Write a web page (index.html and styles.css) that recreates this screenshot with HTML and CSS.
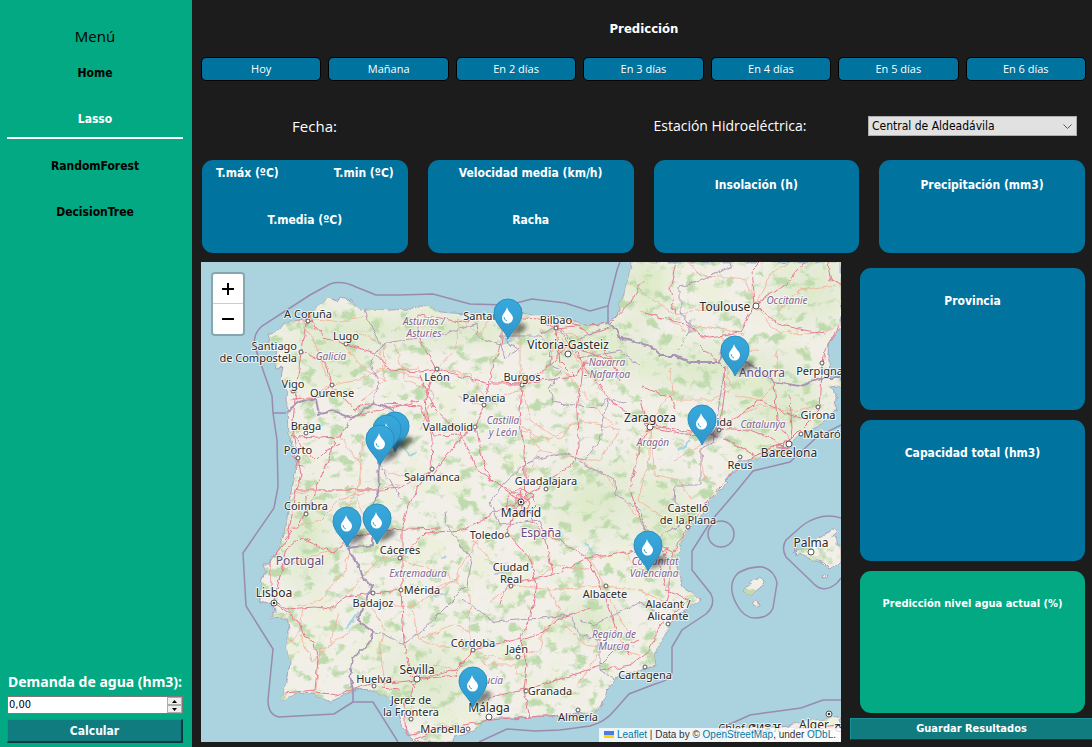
FILE: index.html
```html
<!DOCTYPE html>
<html lang="es">
<head>
<meta charset="utf-8">
<title>Predicción</title>
<link rel="stylesheet" href="styles.css">
</head>
<body>
<div class="app">
  <aside class="sidebar">
    <h2 class="menu-title">Menú</h2>
    <nav class="menu">
      <a class="menu-link" href="#home">Home</a>
      <a class="menu-link active" href="#lasso">Lasso</a>
      <a class="menu-link" href="#randomforest">RandomForest</a>
      <a class="menu-link" href="#decisiontree">DecisionTree</a>
    </nav>
    <form class="demand">
      <label class="demand-label" for="demanda">Demanda de agua (hm3):</label>
      <div class="spin">
        <input class="spin-input" id="demanda" type="text" inputmode="decimal" value="0,00">
        <div class="spin-arrows">
          <button class="spin-button" type="button" aria-label="Aumentar"><svg width="5" height="3" viewBox="0 0 5 3"><path d="M0 3 2.500 0 5 3z"/></svg></button>
          <button class="spin-button" type="button" aria-label="Disminuir"><svg width="5" height="3" viewBox="0 0 5 3"><path d="M0 0 2.500 3 5 0z"/></svg></button>
        </div>
      </div>
      <button class="action" type="button">Calcular</button>
    </form>
  </aside>

  <main class="main">
    <h1 class="title">Predicción</h1>
    <div class="days">
      <button class="day" type="button">Hoy</button>
      <button class="day" type="button">Mañana</button>
      <button class="day" type="button">En 2 días</button>
      <button class="day" type="button">En 3 días</button>
      <button class="day" type="button">En 4 días</button>
      <button class="day" type="button">En 5 días</button>
      <button class="day" type="button">En 6 días</button>
    </div>
    <div class="filters">
      <span class="filter-label date-label">Fecha:</span>
      <label class="filter-label station-label" for="estacion">Estación Hidroeléctrica:</label>
      <div class="select-wrap">
        <select class="station" id="estacion"><option>Central de Aldeadávila</option></select>
        <svg class="chevron" width="9" height="6" viewBox="0 0 9 6"><path d="M.5.5l4 4 4-4" fill="none" stroke="#555"/></svg>
      </div>
    </div>
    <section class="cards">
      <div class="card card-double">
        <div class="pair"><span>T.máx (ºC)</span><span>T.min (ºC)</span></div>
        <span>T.media (ºC)</span>
      </div>
      <div class="card card-double"><span>Velocidad media (km/h)</span><span>Racha</span></div>
      <div class="card card-single">Insolación (h)</div>
      <div class="card card-single">Precipitación (mm3)</div>
    </section>
    <section class="lower">
      <div class="map">
        <svg class="map-canvas" viewBox="201 262 640 480" role="img" aria-label="Mapa de España y Portugal">
          <defs>
            <path id="land" d="M632 262L627 282 621 305 616 317 606 323 600 325 586 325 573 322 560 317 543 315 530 315 520 312 493 317 463 314 440 312 430 307 420 305 413 309 390 310 360 309 353 303 346 298 340 297 335 300 328 298 322 303 315 308 310 318 300 320 292 321 285 323 275 332 268 334 270 345 278 354 274 360 276 368 283 367 281 378 287 390 286 398 287 412 288 429 292 445 297 462 294 478 289 502 286 527 278 550 270 565 263 565 266 572 263 580 260 597 260 602 272 605 276 610 271 618 282 617 288 620 289 633 287 647 290 663 287 683 282 700 297 693 313 694 330 702 343 695 357 689 373 690 387 697 397 707 403 727 413 738 417 742H452L455 737 470 732 483 722 497 718 530 717 553 716 567 717 578 712 593 715 602 705 607 690 617 678 640 670 657 665 655 655 660 643 668 630 673 617 690 607 701 600 693 593 683 587 677 572 677 557 682 540 690 528 700 518 708 502 720 489 729 483 725 479 740 462 757 459 773 450 787 447 800 435 823 422 835 410 837 399 832 387 841 385V379L830 377 828 362 828 345 837 332 841 329V262Z"/>
            <path id="isles" d="M797 551l10-6 12-7 8-5 6-4 3 3-4 4 5 3v5l4 2v15l-3 3-9 5-6-6-8-4-7-1-8-6-3 3-1-5-3 2 4-4zM745 591l2-5 6-5 8-3 3 3-5 7-6 4-2 3-6-1zM753 603l4-2 1 3 3 1-3 2-5-1z M823 576l4-2-1 4-2 1z M717 742l20-8 24-6 28-3 20-4 18-2 14-3v26z"/>
            <clipPath id="land-clip"><use href="#land"/><use href="#isles"/></clipPath>
            <filter id="woods" x="0" y="0" width="100%" height="100%" color-interpolation-filters="sRGB">
              <feTurbulence type="fractalNoise" baseFrequency=".07 .09" numOctaves="5" seed="8"/>
              <feColorMatrix values="0 0 0 0 .75  0 0 0 0 .86  0 0 0 0 .68  6 0 0 0 -3.300"/>
            </filter>
            <filter id="fields" x="0" y="0" width="100%" height="100%" color-interpolation-filters="sRGB">
              <feTurbulence type="fractalNoise" baseFrequency=".03" numOctaves="4" seed="21"/>
              <feColorMatrix values="0 0 0 0 .93  0 0 0 0 .94  0 0 0 0 .86  4 0 0 0 -2"/>
            </filter>
            <filter id="rough" x="-5%" y="-5%" width="110%" height="110%">
              <feTurbulence type="fractalNoise" baseFrequency=".12" numOctaves="2" seed="4"/>
              <feDisplacementMap in="SourceGraphic" scale="6" xChannelSelector="R" yChannelSelector="G"/>
            </filter>
            <filter id="soft" x="-50%" y="-50%" width="200%" height="200%"><feGaussianBlur stdDeviation="2"/></filter>
            <linearGradient id="pin-fill" x1="0" y1="0" x2="0" y2="1"><stop offset="0" stop-color="#38a9dc"/><stop offset="1" stop-color="#2f97cb"/></linearGradient>
            <radialGradient id="veil"><stop offset="0" stop-color="#cfe5b6" stop-opacity=".6"/><stop offset="1" stop-color="#cfe5b6" stop-opacity="0"/></radialGradient>
            <g id="pin">
              <path d="M0 39L8 25Q17 23 19 28 16 34 0 39z" fill="#222" opacity=".55" filter="url(#soft)"/>
              <path d="M0 40C-3 31-14 25-14 14A14 14 0 0 1 14 14C14 25 4 31 0 40z" fill="url(#pin-fill)" stroke="#2a8fc2"/>
              <path d="M-1 8C-2 13-6 15-6 19A5 5 0 0 0 5 19C5 15 0 13-1 8z" fill="#fff"/>
              <path d="M-4 18Q-4 21-1 22" fill="none" stroke="#38a9dc"/>
            </g>
          </defs>
          <rect x="201" y="262" width="640" height="480" fill="#aad3df"/>
          <g filter="url(#rough)">
            <g fill="#f2efe9" stroke="#9b86a8" stroke-width=".7"><use href="#land"/><use href="#isles"/></g>
            <g clip-path="url(#land-clip)">
              <rect x="201" y="262" width="640" height="480" filter="url(#fields)"/>
              <g fill="url(#veil)">
                <ellipse cx="330" cy="345" rx="60" ry="50"/><ellipse cx="440" cy="330" rx="130" ry="28"/>
                <ellipse cx="590" cy="345" rx="80" ry="40"/><ellipse cx="710" cy="368" rx="130" ry="38"/>
                <ellipse cx="810" cy="290" rx="60" ry="55"/><ellipse cx="645" cy="280" rx="36" ry="60"/>
                <ellipse cx="780" cy="410" rx="70" ry="50"/><ellipse cx="600" cy="500" rx="75" ry="55"/>
                <ellipse cx="668" cy="530" rx="40" ry="75"/><ellipse cx="590" cy="620" rx="44" ry="34"/>
                <ellipse cx="425" cy="680" rx="70" ry="52"/><ellipse cx="305" cy="540" rx="40" ry="80"/>
              </g>
              <rect x="201" y="262" width="640" height="480" filter="url(#woods)"/>
              <g fill="none" stroke="#aad3df" stroke-width="2"><path d="M400 445l8 10 8-2 M429 587l7 9 12-2 M345 628l8-7 6-9 M585 542l5 6 3 8 M690 440l-7 8-5 2 M502 343l9-3 M495 573l8-1 M447 555l-6 4"/></g>
            </g>
          </g>
          <g filter="url(#rough)" fill="none" stroke="#f4ad98" stroke-width=".8">
            <path d="M297 319L313 338 326 376 331 385 360 380 385 367 384 345 355 331M315 319L342 322 367 316M331 385L312 396 290 400M342 343L366 370 385 380M385 370L420 368M380 371L393 372 420 377M362 402L385 380 380 350M340 436L362 468 360 485 345 510M363 437L360 475 357 500 367 520M290 494L320 490 370 490 400 485M284 530L320 520 340 500 365 492M283 570L300 560 345 545M297 606L321 600 345 570 350 551M288 645L300 630 303 607M300 634L312 662 330 645 338 612M316 690L320 650 350 632M345 596L380 558 401 555M366 597L385 630 380 650 386 690M373 604L410 607 440 590 460 575M400 560L450 575 469 595 470 630 473 650M413 610L418 640 440 646 470 648M420 638L455 625 470 632M473 650L486 665 515 665 517 675M473 650L505 660 540 650 545 625M411 675L435 665 458 671M380 470L415 480 432 470M395 345L405 380 435 393 420 430M437 369L455 350 459 318M459 318L480 335 491 315M437 369L470 374 485 400M455 395L480 405 520 390 520 315M522 387L530 420 560 440 575 420M522 387L550 365 559 322M540 330L575 335 590 350 610 360M558 365L590 400 612 425M562 340L605 395M621 430L580 420 550 440 520 430M620 430L600 460 580 460 540 450M517 500L540 450 523 425M580 460L610 480 635 515 650 530M480 537L465 560 455 580 430 590M473 540L510 585 490 602M512 585L550 590 605 586M546 585L560 610 540 640M605 586L590 560 625 552 641 575M606 586L620 620 635 640M605 586L640 590 670 604M592 625L600 650 578 685M565 625L585 645 620 650 640 655M650 427L650 457 638 500 668 520M640 440L665 400 673 392 670 368M650 430L655 475 680 480 690 500M675 460L700 445 705 480M675 400L710 400 730 390 724 350M719 335L735 355 760 350M735 395L760 400 780 380 775 350M730 420L760 405 795 412 818 405M641 312L670 320 688 333 700 325 745 334M688 262L700 275 745 280 757 305M640 290L675 315 730 305M755 305L775 330 800 335 832 330M790 262L770 275 755 306M780 310L800 290 835 285M530 555L535 580 555 565 590 570"/>
          </g>
          <g filter="url(#rough)" fill="none" stroke="#e77991" stroke-width="1">
            <path d="M308 320L301 353 296 390 292 430 298 458 301 475 297 490 287 540 270 560 270 590 276 602M310 320L325 338 342 343 375 353 390 370 420 372 437 369 489 384 522 384 553 362 568 345M301 350L325 363 331 385 354 410 365 403 420 406 434 436M293 399L320 397 331 385M298 438L340 436 352 417 420 401M292 435L316 460 325 451 340 445M297 490L330 490 382 490 400 488 432 470M306 515L335 440M284 540L306 515 306 495M276 592L287 550 300 538 335 553 346 540 380 530 440 528M275 602L285 609 315 607 331 609 345 597 373 593 401 590M276 605L298 620 304 636 314 642 318 660 315 690 285 693M315 692L337 695 373 683 389 683 417 680M401 590L404 640 410 675 417 680 405 706 407 735 443 728 483 722 540 716 578 715M434 369L425 400 432 440 431 470 410 500 402 525 402 590M437 371L420 340 418 315 440 318 459 322 491 317 540 320 556 328 610 323 632 300 644 280M502 316L502 340 491 374 485 402 475 428 461 437 431 478M434 436L461 435 478 470 503 488 520 500M461 435L475 428 480 450 490 480 518 494M420 375L433 407 461 434M491 382L522 383 575 377 584 363 610 365M522 387L520 410 524 450 526 500M555 325L560 362 575 377M553 320L570 340 584 365 612 402 645 423 690 432 715 428 750 430 775 440 789 450M568 345L590 353 613 360M584 363L577 410 578 445 575 462 520 500M520 500L490 515 463 530 425 533 402 557M520 500L507 533 530 560 537 585 530 620 519 638 473 650 455 675 417 680M520 500L545 540 553 575 587 558 625 553 653 547M553 575L506 585 500 604M546 532L587 558 600 585 620 640 630 655M519 640L543 632 557 620 590 608M519 638L527 665 524 690 490 697 480 715M524 690L560 680 600 665 615 650 640 640M524 690L530 717M417 680L455 670 473 652M650 427L645 420 640 400M650 427L640 445 630 490 640 520 650 540 673 552M648 533L660 560 665 590 690 600 660 625 650 650 630 665 600 670M650 427L685 434 720 436 755 455 790 448M708 500L680 540 670 560 670 590 665 610M709 500L730 475 757 455 790 440 820 410 822 370 825 350 838 328M719 430L740 415 760 400 790 415 808 420M774 382L777 420 790 442M790 396L792 430 788 450M755 305L780 325 825 334M755 305L740 332 705 338 688 325 645 313M755 305L752 270 760 262M755 305L785 285 805 262M676 262L670 290 675 315M641 387L671 397 675 410M720 425L725 390 724 368 700 345M600 345L612 360 620 380M568 320L590 335 610 328M400 690L382 688 M415 739l25-11M828 262l2 17 11 5M752 735l25-5 35-1 29-5M790 742l15-10 35-4"/>
            <path d="M506 502l6-10 9-4 12 8 4 9-8 8-12 2-10-5zM512 504l8-9 10 7-4 9-9 1zM507 512l27-16M520 490l4 25M779 444l6 4-8-1 8-5-2 13M649 421l-5 4 9 3-5 4 2-12M668 555l-7-4 8-2-4 7M299 320l13 2-2-6-8 2M291 456l8 5-3 4 8 1M415 673l8 8-12 0 5 8"/>
          </g>
          <g filter="url(#rough)" fill="none" stroke="#b09db8" stroke-width="1">
            <path d="M364 309L372 328 382 345 370 360 379 385 371 405M382 344L403 340 440 335 476 324M476 324L478 337 501 345 505 358 519 350 500 336 540 336 551 346 550 365 560 370 549 388 552 402 580 406 596 408 608 398 626 404M540 333L558 328 578 358 620 350 640 366M578 340L600 330M608 398L600 440 585 460 560 453 527 462 503 485 490 502 500 525 540 520 546 540M402 742M380 465L390 480 402 500M445 512L447 525 472 560 467 585 440 612 420 633 402 645 382 633 373 632M463 600L495 622 530 619 570 615 580 635 600 640 600 670 615 680M580 620L595 625 620 612 640 602 655 610M579 462L615 480 616 495 640 510 650 545 665 532 690 520M725 366L720 398 713 442 701 450 701 485 675 485 674 502 690 515M700 335L680 312 680 286 700 280 732 266 731 262M677 350L690 333 690 318"/>
          </g>
          <g filter="url(#rough)" fill="none" stroke="#a995b3" stroke-width="2">
            <path d="M286 412L299 402 316 399 319 415 330 411 350 417 361 413 373 402 392 410 393 430 378 455 379 492 374 505 372 545 348 548 358 565 365 580 373 585 366 602 357 620 373 632 370 643 353 658 350 676 353 690M608 323L616 328 622 339 640 343 655 350 660 356 676 356 690 362 719 362 722 350 735 358 755 368 774 382 800 386 820 379 841 379"/>
          </g>
          <g fill="none" stroke="#9a8aae" stroke-width="1.500">
            <path d="M353 690V702H373L398 742M353 702L334 714 279 717Q268 715 268 700L273 649 246 606 243 553 274 508 278 487 277 440 273 413H286M273 413L272 396 255 347Q252 335 262 326L310 295 330 284Q342 280 356 287L376 295H400L433 294 470 304 508 305 532 299 565 303 590 311 608 306 617 270 620 262M608 306V323M479 742L507 729 535 731 560 730 590 726Q605 722 614 711L629 694 655 684Q671 680 672 672V647L682 630 706 614Q716 605 711 594L692 570V551L711 521 735 493 753 471 790 462 817 437 841 425M717 730L750 715 801 708 823 700H841"/>
            <ellipse cx="721" cy="534" rx="13" ry="13"/><path d="M738 573Q750 566 763 567 775 571 777 583L773 608Q769 618 755 618 744 618 737 605 726 585 738 573zM841 518Q822 512 803 525L786 540Q781 548 786 557L812 582Q823 595 837 583L841 578"/>
          </g>
          <g class="towns">
            <circle cx="308" cy="321" r="2"/><circle cx="346" cy="344" r="2"/><circle cx="301" cy="352" r="2"/><circle cx="293" cy="391" r="2"/><circle cx="332" cy="385" r="2"/><circle cx="306" cy="433" r="2"/><circle cx="298" cy="458" r="2"/><circle cx="437" cy="369" r="2"/><circle cx="484" cy="405" r="2"/><circle cx="475" cy="427" r="2"/><circle cx="522" cy="385" r="2"/><circle cx="556" cy="328" r="2"/><circle cx="568" cy="354" r="3"/><circle cx="432" cy="469" r="2"/><circle cx="546" cy="489" r="2"/><circle cx="306" cy="514" r="2"/><circle cx="400" cy="558" r="2"/><circle cx="373" cy="593" r="2"/><circle cx="401" cy="590" r="2"/><circle cx="374" cy="686" r="2"/><circle cx="417" cy="679" r="3"/><circle cx="411" cy="719" r="2"/><circle cx="507" cy="535" r="2"/><circle cx="511" cy="586" r="2"/><circle cx="606" cy="586" r="2"/><circle cx="473" cy="650" r="2"/><circle cx="518" cy="657" r="2"/><circle cx="526" cy="691" r="2"/><circle cx="489" cy="717" r="3"/><circle cx="468" cy="729" r="2"/><circle cx="578" cy="710" r="2"/><circle cx="645" cy="667" r="2"/><circle cx="668" cy="624" r="2"/><circle cx="688" cy="527" r="2"/><circle cx="650" cy="427" r="3"/><circle cx="719" cy="430" r="2"/><circle cx="740" cy="457" r="2"/><circle cx="789" cy="444" r="3"/><circle cx="801" cy="434" r="2"/><circle cx="818" cy="407" r="2"/><circle cx="822" cy="363" r="2"/><circle cx="756" cy="306" r="3"/><circle cx="811" cy="552" r="3"/>
            <circle cx="521" cy="502" r="3"/><circle cx="274" cy="603" r="3"/><circle cx="829" cy="714" r="3"/>
          </g>
          <g fill="#333"><circle cx="521" cy="502" r="1.300"/><circle cx="274" cy="603" r="1.300"/><circle cx="829" cy="714" r="1.300"/></g>
          <g class="place">
            <text x="308" y="318">A Coruña</text><text x="346" y="340">Lugo</text><text x="297" y="350" class="end">Santiago</text><text x="297" y="362" class="end">de Compostela</text><text x="293" y="388">Vigo</text><text x="332" y="397">Ourense</text><text x="306" y="430">Braga</text><text x="298" y="454">Porto</text><text x="437" y="381">León</text><text x="484" y="402">Palencia</text><text x="448" y="431">Valladolid</text><text x="522" y="381">Burgos</text><text x="490" y="320">Santander</text><text x="556" y="324">Bilbao</text><text x="432" y="481">Salamanca</text><text x="546" y="485">Guadalajara</text><text x="306" y="510">Coimbra</text><text x="400" y="554">Cáceres</text><text x="373" y="607">Badajoz</text><text x="422" y="594">Mérida</text><text x="374" y="683">Huelva</text><text x="411" y="704">Jerez de</text><text x="411" y="716">la Frontera</text><text x="487" y="539">Toledo</text><text x="511" y="571">Ciudad</text><text x="511" y="583">Real</text><text x="605" y="598">Albacete</text><text x="473" y="647">Córdoba</text><text x="517" y="653">Jaén</text><text x="550" y="695">Granada</text><text x="443" y="733">Marbella</text><text x="578" y="721">Almería</text><text x="645" y="679">Cartagena</text><text x="668" y="608">Alacant /</text><text x="668" y="620">Alicante</text><text x="688" y="512">Castelló</text><text x="688" y="524">de la Plana</text><text x="717" y="426">Lleida</text><text x="740" y="469">Reus</text><text x="822" y="438">Mataró</text><text x="818" y="419">Girona</text><text x="823" y="375">Perpignan</text><text x="750" y="732">Chlef ⵛⵍⴻⴼ</text>
          </g>
          <g class="place city">
            <text x="568" y="349">Vitoria-Gasteiz</text><text x="650" y="422">Zaragoza</text><text x="725" y="311">Toulouse</text><text x="789" y="457">Barcelona</text><text x="521" y="517">Madrid</text><text x="274" y="597">Lisboa</text><text x="417" y="674">Sevilla</text><text x="489" y="712">Málaga</text><text x="811" y="547">Palma</text><text x="814" y="729">Alger</text><text x="841" y="729">الج</text>
          </g>
          <g class="place region">
            <text x="331" y="360">Galicia</text><text x="424" y="325">Asturias /</text><text x="424" y="337">Asturies</text><text x="607" y="366">Navarra</text><text x="607" y="378">- Nafarroa</text><text x="503" y="424">Castilla</text><text x="503" y="436">y León</text><text x="653" y="446">Aragón</text><text x="763" y="428">Catalunya</text><text x="787" y="304">Occitanie</text><text x="418" y="577">Extremadura</text><text x="655" y="565">Comunitat</text><text x="654" y="577">Valenciana</text><text x="614" y="638">Región de</text><text x="614" y="650">Murcia</text><text x="481" y="684">Andalucía</text>
          </g>
          <g class="place country"><text x="300" y="565">Portugal</text><text x="541" y="537">España</text><text x="762" y="377">Andorra</text></g>
          <g>
            <use href="#pin" x="508" y="299"/><use href="#pin" x="735" y="336"/><use href="#pin" x="702" y="405"/><use href="#pin" x="395" y="412"/><use href="#pin" x="387" y="415"/><use href="#pin" x="380" y="425"/><use href="#pin" x="377" y="504"/><use href="#pin" x="347" y="507"/><use href="#pin" x="648" y="531"/><use href="#pin" x="473" y="667"/>
          </g>
        </svg>
        <div class="zoom">
          <button class="zoom-button" type="button" aria-label="Acercar"><svg width="12" height="12" viewBox="0 0 12 12"><path d="M6 0v12M0 6h12" stroke="#000" stroke-width="2"/></svg></button>
          <button class="zoom-button" type="button" aria-label="Alejar"><svg width="12" height="12" viewBox="0 0 12 12"><path d="M0 6h12" stroke="#000" stroke-width="2"/></svg></button>
        </div>
        <div class="attribution"><svg class="flag" width="10" height="7" viewBox="0 0 10 7"><path fill="#4c7be1" d="M0 0h10v4H0z"/><path fill="#ffd500" d="M0 4h10v3H0z"/></svg> <a href="#leaflet">Leaflet</a> | Data by © <a href="#osm">OpenStreetMap</a>, under <a href="#odbl">ODbL</a>.</div>
      </div>
      <div class="results">
        <div class="result">Provincia</div>
        <div class="result">Capacidad total (hm3)</div>
        <div class="result prediction">Predicción nivel agua actual (%)</div>
        <button class="action save" type="button">Guardar Resultados</button>
      </div>
    </section>
  </main>
</div>
</body>
</html>
```
FILE: styles.css
```css
* { box-sizing: border-box; }
body {
  margin: 0;
  background: #1c1c1c;
  color: #fff;
  font: 12px/16px "DejaVu Sans Condensed", "Noto Sans", sans-serif;
}
button, input, select { font: inherit; }
.app { display: flex; min-height: 100vh; }
.sidebar {
  flex: 0 0 192px;
  min-width: 0;
  display: flex;
  flex-direction: column;
  padding: 26px 9px 4px 7px;
  background: #02a982;
}
.menu-title {
  margin: 0;
  color: #000;
  font: 15px/20px "Open Sans", "Noto Sans", sans-serif;
  text-align: center;
}
.menu { display: flex; flex-direction: column; gap: 16px; padding-top: 11px; }
.menu-link {
  height: 30px;
  line-height: 32px;
  color: #000;
  font-weight: bold;
  text-align: center;
  text-decoration: none;
}
.menu-link.active {
  height: 36px;
  margin-bottom: -5px;
  color: #fff;
  border-bottom: 2px solid #fff;
}
.demand { display: flex; flex-direction: column; margin-top: auto; }
.demand-label {
  margin-bottom: 4px;
  font: bold 14px/20px "Noto Sans", sans-serif;
  white-space: nowrap;
  text-align: center;
}
.spin {
  display: flex;
  height: 18px;
  margin-bottom: 5px;
  border: 1px solid #7a7a7a;
  background: #fff;
}
.spin-input { flex: 1; min-width: 0; padding: 0 1px; border: 0; outline: 0; background: #fff; font-size: 11px; color: #000; }
.spin-arrows { display: flex; flex-direction: column; width: 15px; }
.spin-button {
  flex: 1;
  display: flex;
  align-items: center;
  justify-content: center;
  padding: 0;
  border: 1px solid #adadad;
  background: #eee;
}
.action {
  height: 24px;
  padding: 0;
  border: 1px solid;
  border-color: #1b9296 #0a3d40 #0a3d40 #1b9296;
  border-width: 1px 2px 2px 1px;
  background: #107c80;
  color: #fff;
  font-weight: bold;
}
.main { flex: 1; min-width: 0; padding-top: 19px; }
.title { margin: 0 0 18px; padding-left: 4px; font-size: 13px; line-height: 20px; text-align: center; }
.days { display: flex; gap: 7px; padding: 0 6px 0 9px; }
.day {
  flex: 1;
  height: 24px;
  padding: 0;
  border: 1px solid #000;
  border-radius: 5px;
  background: #00739f;
  color: #fff;
  font-family: "Open Sans", "Noto Sans", sans-serif;
  font-size: 11px;
}
.filters {
  display: grid;
  grid-template-columns: 225px 1fr 264px 209px;
  align-items: center;
  height: 20px;
  margin: 34px 15px 25px 10px;
}
.filter-label { padding-top: 1px; font: 14px/20px "Open Sans", "Noto Sans", sans-serif; text-align: center; }
.date-label { font-size: 15px; }
.station-label { grid-column: 3; padding-right: 12px; }
.select-wrap { position: relative; display: flex; }
.station {
  width: 100%;
  height: 20px;
  padding: 0 3px;
  appearance: none;
  border: 1px solid #adadad;
  border-radius: 0;
  background: #e1e1e1;
  color: #000;
}
.chevron { position: absolute; right: 5px; top: 8px; pointer-events: none; }
.cards { display: grid; grid-template-columns: repeat(4, 1fr); gap: 20px; padding: 0 7px 0 10px; }
.card {
  height: 93px;
  border-radius: 11px;
  background: #00739f;
  font-weight: bold;
  text-align: center;
}
.card-double { display: flex; flex-direction: column; gap: 31px; padding: 5px 14px; }
.pair { display: flex; justify-content: space-between; }
.card-single { padding-top: 17px; }
.lower { display: grid; grid-template-columns: minmax(0, 1fr) 242px; gap: 9px; padding: 9px 0 5px 9px; }
.map { position: relative; align-self: start; overflow: hidden; }
.map-canvas { display: block; width: 100%; }
.towns { fill: #fff; stroke: #555; stroke-width: 1px; }
.place {
  fill: #2b2b2b;
  stroke: #fff;
  stroke-opacity: .75;
  stroke-width: 2px;
  stroke-linejoin: round;
  paint-order: stroke;
  font: 11px "Noto Sans", sans-serif;
  text-anchor: middle;
}
.place .end { text-anchor: end; }
.city { font-size: 12px; }
.region { fill: #836391; font-size: 10px; font-style: italic; }
.country { fill: #6b4b7c; font-size: 12px; }
.zoom {
  position: absolute;
  top: 10px;
  left: 10px;
  display: flex;
  flex-direction: column;
  width: 34px;
  border: 2px solid #86a7b0;
  border-radius: 4px;
  overflow: hidden;
}
.zoom-button { display: flex; align-items: center; justify-content: center; height: 30px; padding: 0; border: 0; background: #fff; }
.zoom-button:first-child { border-bottom: 1px solid #ccc; }
.attribution {
  position: absolute;
  right: 0;
  bottom: 0;
  padding: 0 5px;
  background: rgba(255, 255, 255, .8);
  color: #333;
  font: 10px/14px "Liberation Sans", Arial, sans-serif;
  white-space: nowrap;
}
.attribution a { color: #0078a8; text-decoration: none; }
.results { display: flex; flex-direction: column; gap: 10px; padding-top: 6px; }
.result {
  flex: 1;
  min-height: 60px;
  margin: 0 7px 0 10px;
  padding-top: 25px;
  border-radius: 11px;
  background: #00739f;
  font-weight: bold;
  text-align: center;
}
.prediction { background: #02a982; font-size: 11px; }
.save { height: 22px; margin: -5px 0 2px; border-right: 0; border-bottom-width: 1px; font-size: 11px; }
```
